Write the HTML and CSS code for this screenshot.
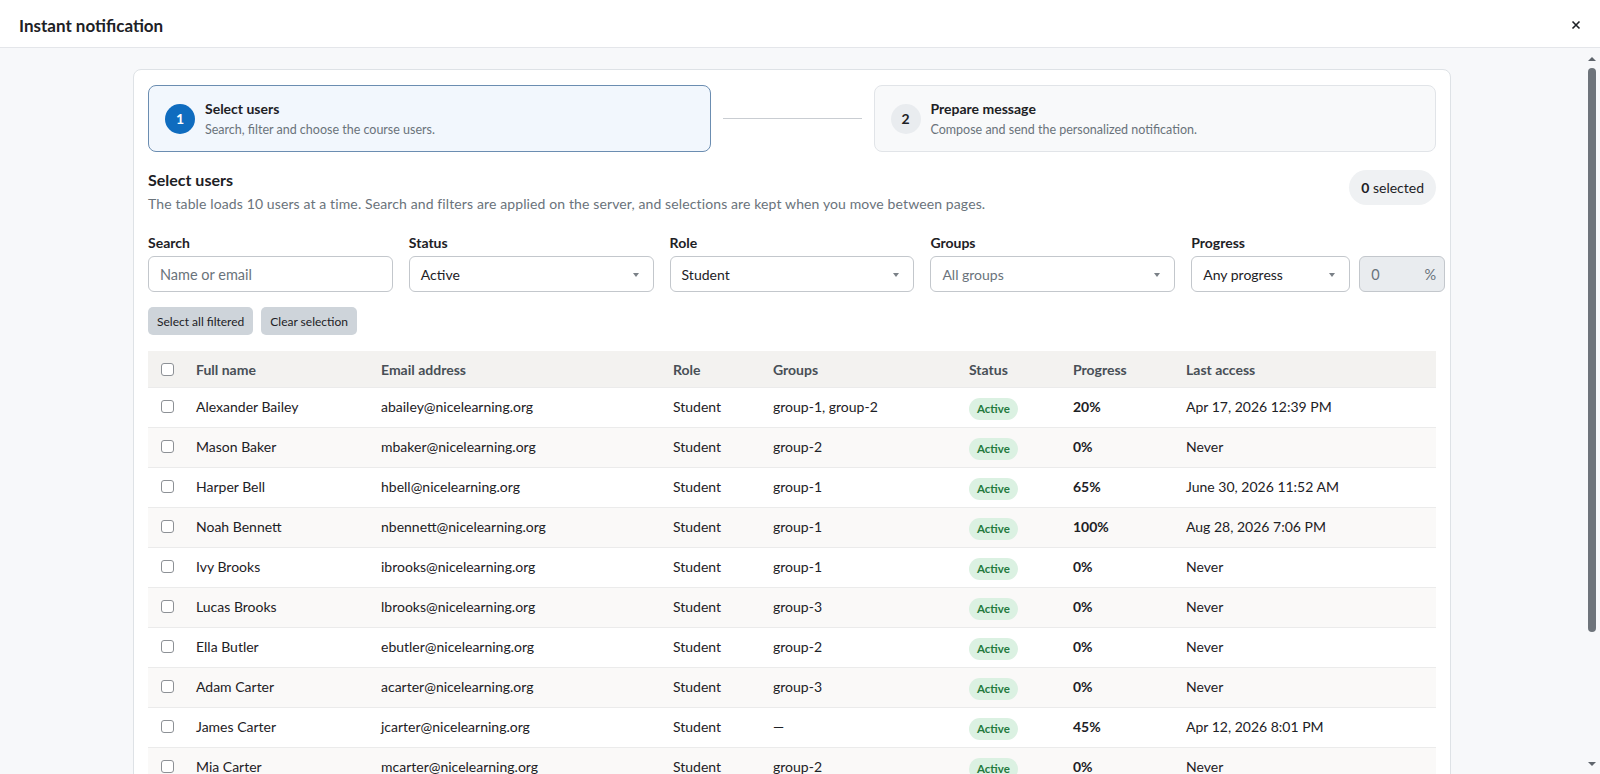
FILE: index.html
```html
<!DOCTYPE html>
<html lang="en">
<head>
    <meta charset="UTF-8">
    <meta name="viewport" content="width=device-width, initial-scale=1.0">
    <title>Instant notification</title>
    <link rel="stylesheet" href="styles.css">
</head>
<body>
    <div class="dialog">
        <header class="dialog-header">
            <h1 class="dialog-title">Instant notification</h1>
            <button class="close-btn" aria-label="Close">
                <svg viewBox="0 0 10 10" width="10" height="10"><path d="M1.5 1.5L8.5 8.5M8.5 1.5L1.5 8.5" /></svg>
            </button>
        </header>

        <div class="dialog-body">
            <div class="wizard">
                <div class="steps">
                    <div class="step active">
                        <span class="step-num">1</span>
                        <div>
                            <div class="step-title">Select users</div>
                            <div class="step-desc">Search, filter and choose the course users.</div>
                        </div>
                    </div>
                    <div class="step-line"></div>
                    <div class="step">
                        <span class="step-num">2</span>
                        <div>
                            <div class="step-title">Prepare message</div>
                            <div class="step-desc">Compose and send the personalized notification.</div>
                        </div>
                    </div>
                </div>

                <div class="section-head">
                    <div>
                        <h2>Select users</h2>
                        <p>The table loads 10 users at a time. Search and filters are applied on the server, and selections are kept when you move between pages.</p>
                    </div>
                    <div class="count-pill"><strong>0</strong> selected</div>
                </div>

                <div class="filters">
                    <div class="filter">
                        <label for="search">Search</label>
                        <input class="field" id="search" type="text" placeholder="Name or email">
                    </div>
                    <div class="filter">
                        <label>Status</label>
                        <div class="field select">Active</div>
                    </div>
                    <div class="filter">
                        <label>Role</label>
                        <div class="field select">Student</div>
                    </div>
                    <div class="filter">
                        <label>Groups</label>
                        <div class="field select placeholder">All groups</div>
                    </div>
                    <div class="filter">
                        <label>Progress</label>
                        <div class="progress-row">
                            <div class="field select progress-select">Any progress</div>
                            <div class="field pct"><span>0</span><span>%</span></div>
                        </div>
                    </div>
                </div>

                <div class="bulk-actions">
                    <button class="btn-secondary">Select all filtered</button>
                    <button class="btn-secondary">Clear selection</button>
                </div>

                <table class="users">
                    <colgroup>
                        <col style="width: 36px">
                        <col style="width: 185px">
                        <col style="width: 292px">
                        <col style="width: 100px">
                        <col style="width: 196px">
                        <col style="width: 104px">
                        <col style="width: 113px">
                        <col>
                    </colgroup>
                    <thead>
                        <tr>
                            <th class="check"><input type="checkbox"></th>
                            <th>Full name</th>
                            <th>Email address</th>
                            <th>Role</th>
                            <th>Groups</th>
                            <th>Status</th>
                            <th>Progress</th>
                            <th>Last access</th>
                        </tr>
                    </thead>
                    <tbody>
                        <tr>
                            <td class="check"><input type="checkbox"></td>
                            <td>Alexander Bailey</td>
                            <td>abailey@nicelearning.org</td>
                            <td>Student</td>
                            <td>group-1, group-2</td>
                            <td><span class="badge">Active</span></td>
                            <td class="progress">20%</td>
                            <td>Apr 17, 2026 12:39 PM</td>
                        </tr>
                        <tr>
                            <td class="check"><input type="checkbox"></td>
                            <td>Mason Baker</td>
                            <td>mbaker@nicelearning.org</td>
                            <td>Student</td>
                            <td>group-2</td>
                            <td><span class="badge">Active</span></td>
                            <td class="progress">0%</td>
                            <td>Never</td>
                        </tr>
                        <tr>
                            <td class="check"><input type="checkbox"></td>
                            <td>Harper Bell</td>
                            <td>hbell@nicelearning.org</td>
                            <td>Student</td>
                            <td>group-1</td>
                            <td><span class="badge">Active</span></td>
                            <td class="progress">65%</td>
                            <td>June 30, 2026 11:52 AM</td>
                        </tr>
                        <tr>
                            <td class="check"><input type="checkbox"></td>
                            <td>Noah Bennett</td>
                            <td>nbennett@nicelearning.org</td>
                            <td>Student</td>
                            <td>group-1</td>
                            <td><span class="badge">Active</span></td>
                            <td class="progress">100%</td>
                            <td>Aug 28, 2026 7:06 PM</td>
                        </tr>
                        <tr>
                            <td class="check"><input type="checkbox"></td>
                            <td>Ivy Brooks</td>
                            <td>ibrooks@nicelearning.org</td>
                            <td>Student</td>
                            <td>group-1</td>
                            <td><span class="badge">Active</span></td>
                            <td class="progress">0%</td>
                            <td>Never</td>
                        </tr>
                        <tr>
                            <td class="check"><input type="checkbox"></td>
                            <td>Lucas Brooks</td>
                            <td>lbrooks@nicelearning.org</td>
                            <td>Student</td>
                            <td>group-3</td>
                            <td><span class="badge">Active</span></td>
                            <td class="progress">0%</td>
                            <td>Never</td>
                        </tr>
                        <tr>
                            <td class="check"><input type="checkbox"></td>
                            <td>Ella Butler</td>
                            <td>ebutler@nicelearning.org</td>
                            <td>Student</td>
                            <td>group-2</td>
                            <td><span class="badge">Active</span></td>
                            <td class="progress">0%</td>
                            <td>Never</td>
                        </tr>
                        <tr>
                            <td class="check"><input type="checkbox"></td>
                            <td>Adam Carter</td>
                            <td>acarter@nicelearning.org</td>
                            <td>Student</td>
                            <td>group-3</td>
                            <td><span class="badge">Active</span></td>
                            <td class="progress">0%</td>
                            <td>Never</td>
                        </tr>
                        <tr>
                            <td class="check"><input type="checkbox"></td>
                            <td>James Carter</td>
                            <td>jcarter@nicelearning.org</td>
                            <td>Student</td>
                            <td>&mdash;</td>
                            <td><span class="badge">Active</span></td>
                            <td class="progress">45%</td>
                            <td>Apr 12, 2026 8:01 PM</td>
                        </tr>
                        <tr>
                            <td class="check"><input type="checkbox"></td>
                            <td>Mia Carter</td>
                            <td>mcarter@nicelearning.org</td>
                            <td>Student</td>
                            <td>group-2</td>
                            <td><span class="badge">Active</span></td>
                            <td class="progress">0%</td>
                            <td>Never</td>
                        </tr>
                    </tbody>
                </table>
            </div>

            <!-- overlay scrollbar of the dialog body -->
            <div class="scrollbar">
                <span class="scroll-arrow up"></span>
                <span class="scroll-thumb"></span>
                <span class="scroll-arrow down"></span>
            </div>
        </div>
    </div>
</body>
</html>
```

FILE: styles.css
```css
body {
  font-family: 'Lato', 'Liberation Sans', sans-serif;
  color: #1d2125;
  background-color: #f7f8fa;
  margin: 0;
  height: 100vh;
  overflow: hidden;
}

.dialog {
  height: 100vh;
  display: flex;
  flex-direction: column;
}

.dialog-header {
  flex: none;
  height: 48px;
  box-sizing: border-box;
  background-color: #ffffff;
  border-bottom: 1px solid #e4e6ea;
  display: flex;
  align-items: center;
  justify-content: space-between;
  padding: 3px 14px 0 19px;
}
.dialog-title {
  margin: 0;
  font-size: 17px;
  font-weight: 700;
  color: #1d2125;
}
.close-btn {
  width: 20px;
  height: 20px;
  border: none;
  background: none;
  padding: 0;
  display: flex;
  align-items: center;
  justify-content: center;
  cursor: pointer;
}
.close-btn svg path {
  stroke: #1d2125;
  stroke-width: 1.6;
  fill: none;
}

.dialog-body {
  flex: 1;
  position: relative;
  overflow: hidden;
  padding: 21px 16px 0 0;
}

.wizard {
  width: 1318px;
  box-sizing: border-box;
  margin: 0 auto;
  background-color: #ffffff;
  border: 1px solid #dee2e6;
  border-radius: 8px;
  padding: 15px 14px 14px;
}

/* steps */
.steps {
  display: grid;
  grid-template-columns: 1fr 139px 1fr;
  gap: 12px;
  align-items: center;
}
.step {
  height: 67px;
  box-sizing: border-box;
  display: flex;
  align-items: center;
  gap: 10px;
  padding: 0 16px;
  background-color: #f8f9fa;
  border: 1px solid #e1e4e8;
  border-radius: 8px;
}
.step.active {
  background-color: #f2f7fd;
  border-color: #6b8db1;
}
.step-num {
  flex: none;
  width: 30px;
  height: 30px;
  border-radius: 50%;
  background-color: #e9ecef;
  color: #1d2125;
  font-size: 14px;
  font-weight: 700;
  display: flex;
  align-items: center;
  justify-content: center;
}
.step.active .step-num {
  background-color: #0f6cbf;
  color: #ffffff;
}
.step-title {
  font-size: 14px;
  font-weight: 700;
  line-height: 18px;
}
.step-desc {
  font-size: 12.5px;
  color: #6a737b;
  line-height: 16px;
  margin-top: 4px;
}
.step-line {
  height: 1px;
  background-color: #c9cdd2;
}

/* section heading */
.section-head {
  display: flex;
  justify-content: space-between;
  align-items: flex-start;
  margin-top: 18px;
}
.section-head h2 {
  margin: 0;
  font-size: 16px;
  font-weight: 700;
  line-height: 20px;
}
.section-head p {
  margin: 5px 0 0;
  font-size: 14px;
  line-height: 18px;
  letter-spacing: 0.12px;
  color: #6a737b;
}
.count-pill {
  margin-top: 0;
  height: 35px;
  line-height: 35px;
  padding: 0 12px;
  border-radius: 18px;
  background-color: #eff1f3;
  font-size: 14px;
  white-space: nowrap;
}

/* filters */
.filters {
  display: grid;
  grid-template-columns: repeat(5, minmax(0, 1fr));
  gap: 16px;
  margin-top: 21px;
}
.filter label {
  display: block;
  font-size: 14px;
  font-weight: 700;
  line-height: 18px;
  margin-bottom: 4px;
}
.field {
  width: 100%;
  height: 36px;
  box-sizing: border-box;
  border: 1px solid #c3c7cc;
  border-radius: 6px;
  padding: 0 11px;
  font-family: inherit;
  font-size: 14.5px;
  color: #1d2125;
  background-color: #ffffff;
  display: flex;
  align-items: center;
}
.field::placeholder {
  color: #6a737b;
}
.select {
  position: relative;
  font-size: 14px;
}
.select::after {
  content: "";
  position: absolute;
  right: 14px;
  top: 16px;
  border-left: 3px solid transparent;
  border-right: 3px solid transparent;
  border-top: 4px solid #7a8087;
}
.select.placeholder {
  color: #6a737b;
}
.progress-row {
  display: flex;
  gap: 9px;
}
.progress-select {
  width: 159px;
  flex: none;
}
.pct {
  width: 86px;
  flex: none;
  justify-content: space-between;
  padding-right: 8px;
  background-color: #e9ecef;
  color: #6a737b;
}

/* bulk buttons */
.bulk-actions {
  display: flex;
  gap: 8px;
  margin-top: 15px;
}
.btn-secondary {
  height: 28px;
  padding: 0 9px;
  border: none;
  border-radius: 5px;
  background-color: #ced4da;
  color: #1d2125;
  font-family: inherit;
  font-size: 12px;
  cursor: pointer;
}

/* table */
.users {
  width: 100%;
  margin-top: 16px;
  border-collapse: collapse;
  table-layout: fixed;
  font-size: 14px;
}
.users th {
  height: 36px;
  padding: 0 12px;
  text-align: left;
  font-weight: 700;
  color: #484f56;
  background-color: #f3f2f0;
}
.users td {
  height: 37px;
  padding: 0 12px 2px;
  border-top: 1px solid #ebebeb;
  white-space: nowrap;
}
.users tbody tr:nth-child(even) td {
  background-color: #faf9f8;
}
.users .check {
  padding-left: 13px;
  padding-right: 0;
}
.users input[type="checkbox"] {
  appearance: none;
  -webkit-appearance: none;
  display: block;
  margin: 0;
  width: 13px;
  height: 13px;
  border: 1px solid #8d9196;
  border-radius: 3px;
  background-color: #ffffff;
}
.users .progress {
  font-weight: 700;
}
.badge {
  display: inline-block;
  padding: 3px 8px;
  line-height: 16px;
  border-radius: 11px;
  background-color: #dbf1e2;
  color: #237a3d;
  font-size: 11.5px;
  font-weight: 700;
  margin-top: 4px;
}

/* scrollbar overlay */
.scrollbar {
  position: absolute;
  top: 0;
  right: 0;
  bottom: 0;
  width: 16px;
}
.scroll-thumb {
  position: absolute;
  top: 20px;
  left: 4px;
  width: 8px;
  height: 564px;
  border-radius: 4px;
  background-color: #6e747b;
}
.scroll-arrow {
  position: absolute;
  left: 4px;
  border-left: 4px solid transparent;
  border-right: 4px solid transparent;
}
.scroll-arrow.up {
  top: 9px;
  border-bottom: 4px solid #5f656c;
}
.scroll-arrow.down {
  bottom: 8px;
  border-top: 4px solid #5f656c;
}
```
